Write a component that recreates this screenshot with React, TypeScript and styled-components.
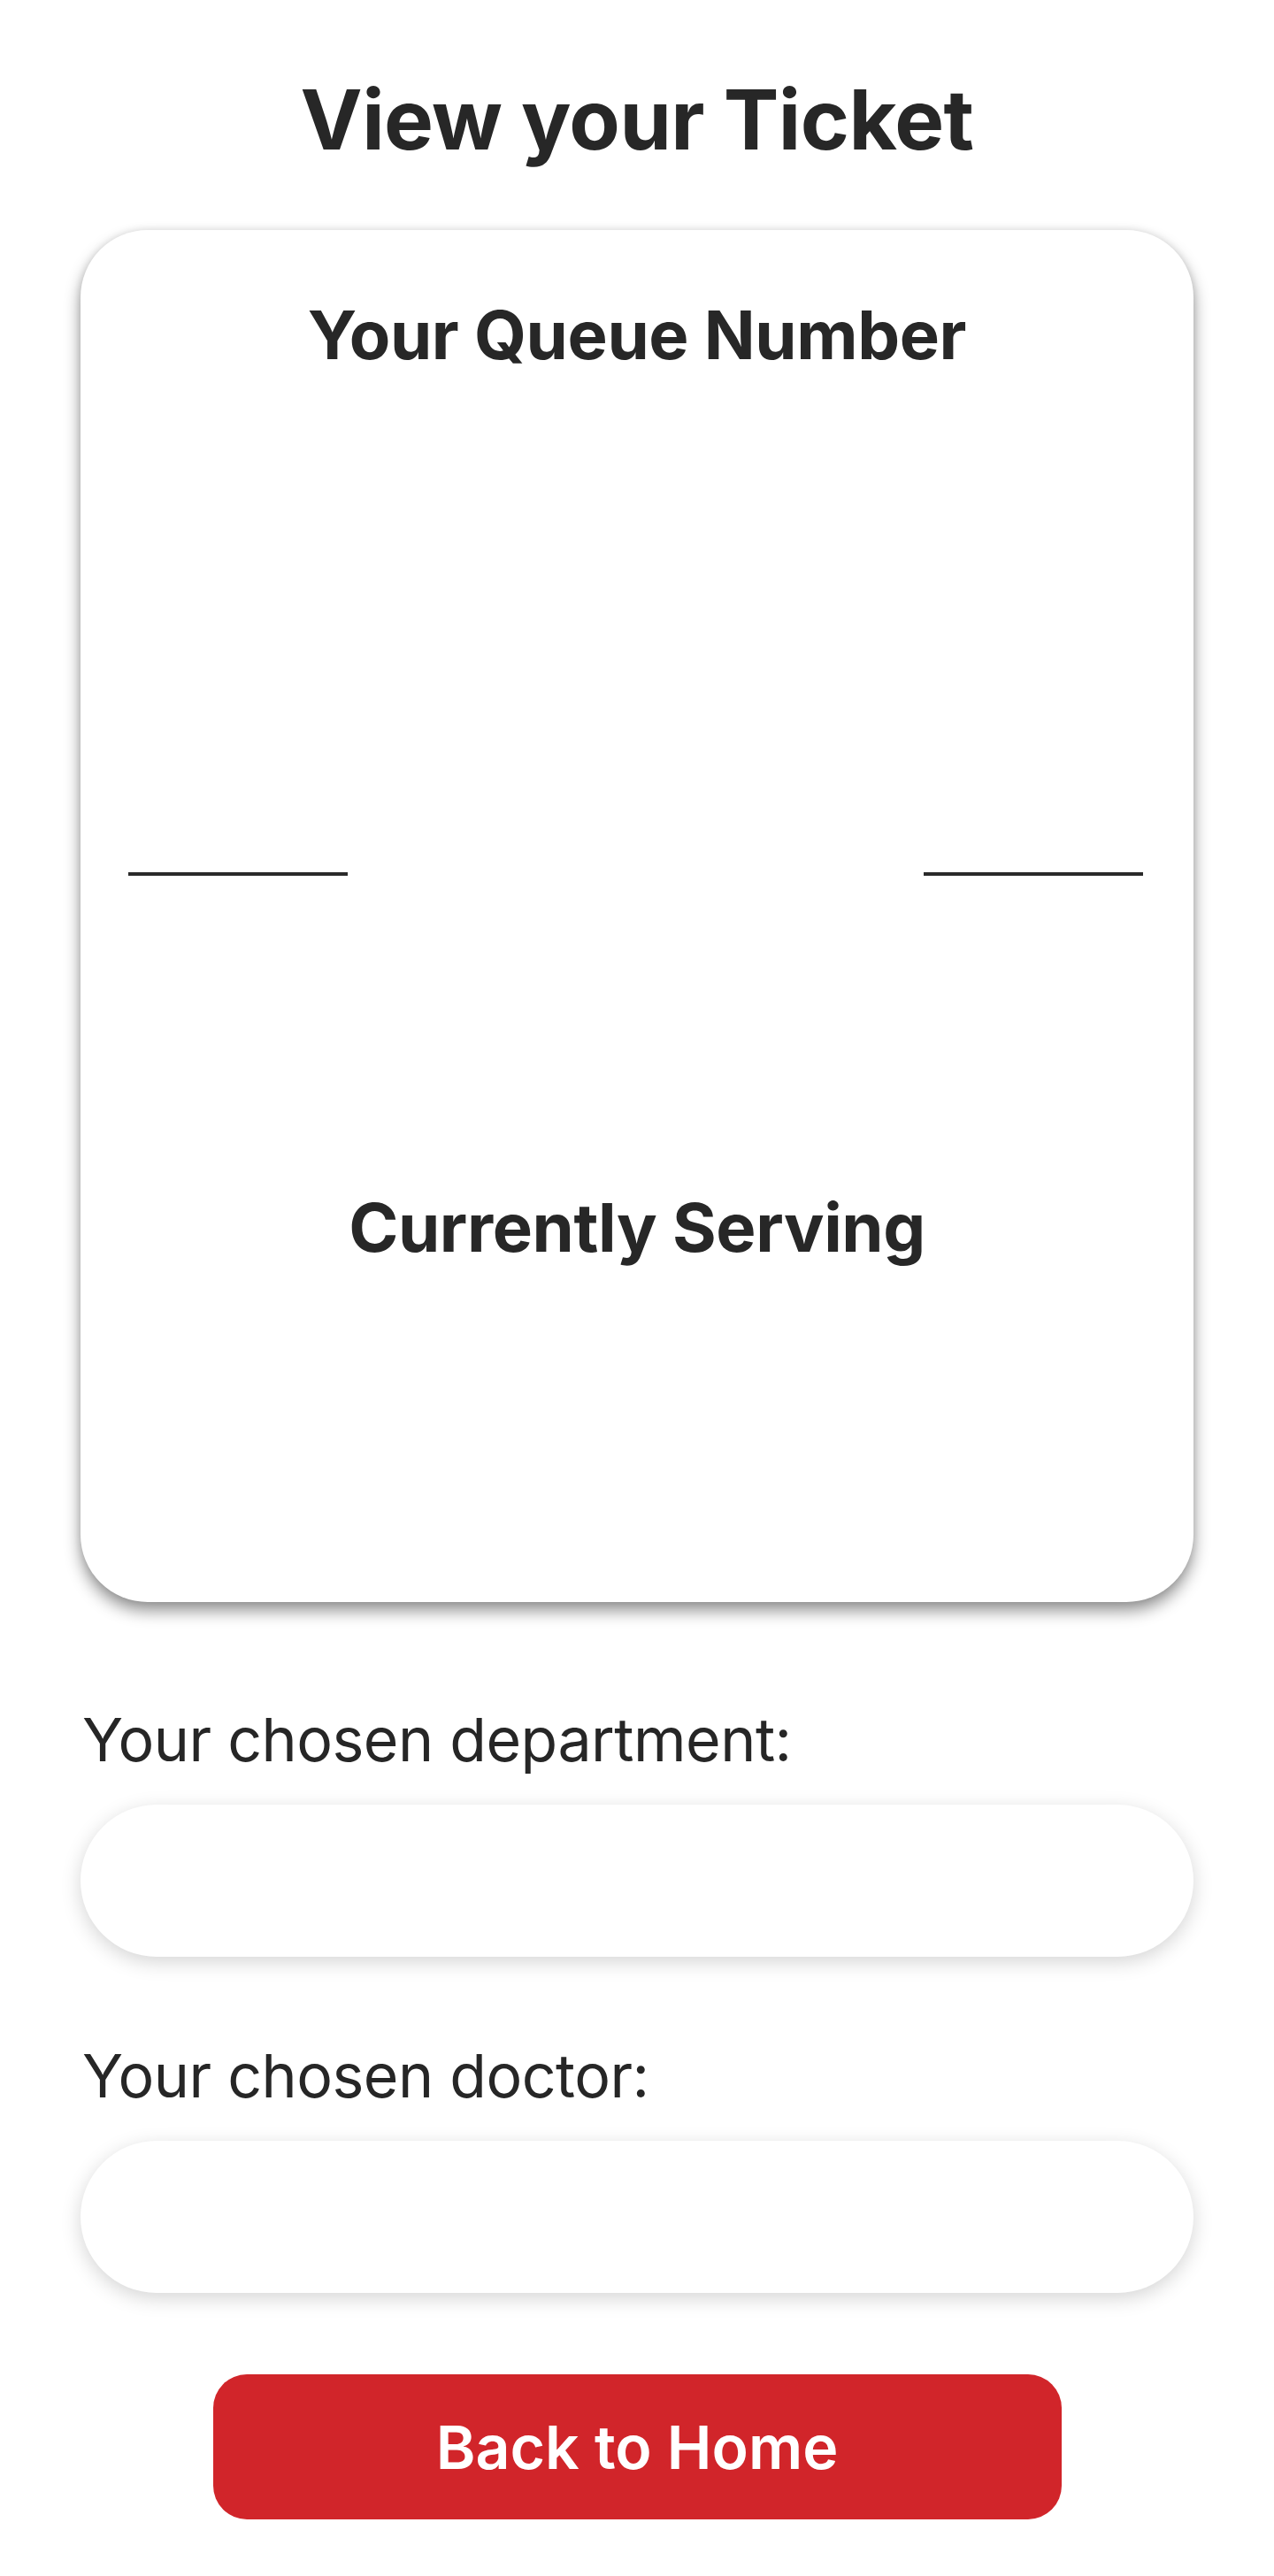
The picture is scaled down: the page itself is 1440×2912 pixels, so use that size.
import React from "react";
import styled, { createGlobalStyle } from "styled-components";

const GlobalStyle = createGlobalStyle`
  html, body {
    margin: 0;
    padding: 0;
    background: #ffffff;
  }
  body {
    font-family: Inter, "Noto Sans", "Liberation Sans", sans-serif;
    color: #282828;
  }
  * { box-sizing: border-box; }
`;

const Page = styled.main`
  width: 1440px;
  min-height: 2912px;
  padding: 77px 91px 64px;
  display: flex;
  flex-direction: column;
  align-items: stretch;
`;

const Title = styled.h1`
  margin: 0;
  text-align: center;
  font-size: 94px;
  font-weight: 700;
  line-height: 116px;
  letter-spacing: -0.6px;
  color: #272727;
`;

const TicketCard = styled.section`
  margin-top: 67px;
  height: 1551px;
  background: #ffffff;
  border-radius: 76px;
  box-shadow: 0 10px 18px rgba(0, 0, 0, 0.42), 0 0 8px rgba(0, 0, 0, 0.1);
  padding-top: 72px;
  display: flex;
  flex-direction: column;
  align-items: center;
`;

const CardHeading = styled.h2<{ $gap?: number }>`
  margin: ${(p) => p.$gap ?? 0}px 0 0;
  text-align: center;
  font-size: 76px;
  font-weight: 700;
  line-height: 92px;
  letter-spacing: -0.4px;
  color: #272727;
`;

const NumberDisplay = styled.div<{ $height: number }>`
  height: ${(p) => p.$height}px;
  width: 100%;
  display: flex;
  align-items: center;
  justify-content: center;
  font-size: 200px;
  font-weight: 700;
`;

const DividerRow = styled.div`
  width: 100%;
  height: 48px;
  padding: 0 57px 0 54px;
  display: flex;
  align-items: center;
  justify-content: space-between;
`;

const Rule = styled.span`
  display: block;
  width: 248px;
  height: 4px;
  background: #2a2a2a;
`;

const FieldLabel = styled.label<{ $gap: number }>`
  display: block;
  margin-top: ${(p) => p.$gap}px;
  padding-left: 2px;
  font-size: 68px;
  font-weight: 400;
  line-height: 82px;
  letter-spacing: -0.5px;
  color: #262626;
`;

const FieldBox = styled.div`
  margin-top: 33px;
  height: 172px;
  border-radius: 86px;
  background: #ffffff;
  box-shadow: 0 6px 22px rgba(0, 0, 0, 0.17);
`;

const HomeButton = styled.button`
  margin: 92px auto 0;
  width: 959px;
  height: 164px;
  border: none;
  border-radius: 38px;
  background: #d1252a;
  color: #ffffff;
  font-family: Inter, "Noto Sans", "Liberation Sans", sans-serif;
  font-size: 68px;
  font-weight: 600;
  letter-spacing: 0;
  cursor: pointer;
`;

export default function App() {
  return (
    <>
      <GlobalStyle />
      <Page>
        <Title>View your Ticket</Title>
        <TicketCard>
          <CardHeading>Your Queue Number</CardHeading>
          <NumberDisplay $height={540} />
          <DividerRow>
            <Rule />
            <Rule />
          </DividerRow>
          <CardHeading $gap={329}>Currently Serving</CardHeading>
          <NumberDisplay $height={378} />
        </TicketCard>
        <FieldLabel $gap={114}>Your chosen department:</FieldLabel>
        <FieldBox />
        <FieldLabel $gap={93}>Your chosen doctor:</FieldLabel>
        <FieldBox />
        <HomeButton>Back to Home</HomeButton>
      </Page>
    </>
  );
}
